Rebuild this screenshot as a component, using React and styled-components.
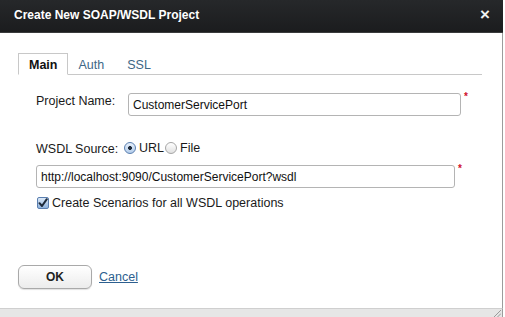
import styled, { createGlobalStyle } from "styled-components";

const GlobalStyle = createGlobalStyle`
  html, body {
    margin: 0;
    padding: 0;
    background: #fff;
    overflow: hidden;
  }
  body {
    font-family: "Liberation Sans", Arial, sans-serif;
  }
`;

const App = () => {
  return (
    <>
      <GlobalStyle />
      <Dialog>
        <TitleBar>
          <Title>Create New SOAP/WSDL Project</Title>
          <Close>×</Close>
        </TitleBar>
        <Body>
          <Tabs>
            <Tab active>Main</Tab>
            <Tab>Auth</Tab>
            <Tab>SSL</Tab>
          </Tabs>
          <Form>
            <Row>
              <Label>Project Name:</Label>
              <Field width={333}>
                <Input defaultValue="CustomerServicePort" />
                <Required>*</Required>
              </Field>
            </Row>
            <SourceRow>
              <Label>WSDL Source:</Label>
              <Radio checked />
              <RadioLabel>URL</RadioLabel>
              <Radio />
              <RadioLabel>File</RadioLabel>
            </SourceRow>
            <Field width={419}>
              <Input defaultValue="http://localhost:9090/CustomerServicePort?wsdl" />
              <Required>*</Required>
            </Field>
            <CheckRow>
              <Check>
                <svg width="10" height="10" viewBox="0 0 10 10">
                  <path d="M1.5 5.2 L4 8 L8.8 1.2" fill="none" stroke="#1d2a3a" strokeWidth="2" strokeLinecap="round" strokeLinejoin="round" />
                </svg>
              </Check>
              <span>Create Scenarios for all WSDL operations</span>
            </CheckRow>
          </Form>
          <Actions>
            <OkButton>OK</OkButton>
            <CancelLink href="#">Cancel</CancelLink>
          </Actions>
        </Body>
        <Footer>
          <Grip>
            <svg width="8" height="8" viewBox="0 0 8 8">
              <path d="M1 8 L8 1 M4.5 8 L8 4.5" stroke="#9a9a9a" strokeWidth="1" />
            </svg>
          </Grip>
        </Footer>
      </Dialog>
    </>
  );
};

const Dialog = styled.div`
  width: 503px;
  height: 317px;
  display: flex;
  flex-direction: column;
  background: #fff;
`;

const TitleBar = styled.div`
  height: 33px;
  flex: none;
  display: flex;
  align-items: center;
  justify-content: space-between;
  padding: 0 13px 0 14px;
  box-sizing: border-box;
  background: linear-gradient(#26282a, #1b1c1e);
  border-bottom: 1px solid #3a3b3c;
`;

const Title = styled.div`
  color: #fff;
  font-size: 12px;
  font-weight: 700;
  margin-top: -2px;
`;

const Close = styled.div`
  color: #f2f2f2;
  font-size: 17px;
  font-weight: 700;
  line-height: 1;
  margin-top: -3px;
`;

const Body = styled.div`
  flex: 1;
  display: flex;
  flex-direction: column;
  border-right: 1px solid #9c9c9c;
  padding: 20px 0 0 18px;
`;

const Tabs = styled.div`
  display: flex;
  align-items: flex-end;
  width: 464px;
  height: 21px;
  border-bottom: 1px solid #c8c8c8;
`;

const Tab = styled.div`
  height: 21px;
  box-sizing: border-box;
  display: flex;
  align-items: center;
  font-size: 12.5px;
  margin-bottom: -1px;
  ${(p) =>
    p.active
      ? `
    padding: 2px 10px 0 10px;
    color: #111;
    font-weight: 700;
    background: #fff;
    border: 1px solid #c8c8c8;
    border-bottom-color: #fff;
    height: 22px;
  `
      : `
    padding: 0 0 0 10px;
    color: #3d6786;
    &:nth-child(3) { padding-left: 23px; }
  `}
`;

const Form = styled.div`
  display: flex;
  flex-direction: column;
  padding: 18px 0 0 18px;
  font-size: 12.5px;
  color: #1a1a1a;
`;

const Row = styled.div`
  display: flex;
  align-items: flex-start;
`;

const Label = styled.span`
  width: 92px;
  flex: none;
  margin-top: 1px;
`;

const Field = styled.div`
  display: flex;
  align-items: flex-start;
  width: ${(p) => p.width}px;
  position: relative;
`;

const Input = styled.input`
  width: 100%;
  height: 23px;
  box-sizing: border-box;
  border: 1px solid #b4b4b4;
  border-radius: 3px;
  padding: 0 4px;
  font-family: "Liberation Sans", Arial, sans-serif;
  font-size: 12px;
  color: #111;
  outline: none;
`;

const Required = styled.span`
  position: absolute;
  right: -7px;
  top: -2px;
  color: #d0102a;
  font-size: 10px;
  font-weight: 700;
`;

const SourceRow = styled.div`
  display: flex;
  align-items: center;
  margin: 24px 0 9px;
  height: 16px;
`;

const Radio = styled.span`
  width: 12px;
  height: 12px;
  border-radius: 50%;
  box-sizing: border-box;
  flex: none;
  border: 1px solid ${(p) => (p.checked ? "#5a7fb0" : "#a6a6a6")};
  background: ${(p) =>
    p.checked
      ? "radial-gradient(circle, #1e2a3a 0 1.8px, transparent 2.2px), linear-gradient(#e7f0fb, #b4cdea)"
      : "linear-gradient(#ffffff, #e0e0e0)"};
  margin-left: ${(p) => (p.checked ? "-4px" : "0")};
`;

const RadioLabel = styled.span`
  margin: 0 1px 0 3px;
`;

const CheckRow = styled.div`
  display: flex;
  align-items: center;
  margin-top: 8px;
  gap: 3px;
`;

const Check = styled.span`
  width: 12px;
  height: 12px;
  box-sizing: border-box;
  border: 1px solid #5a7fb0;
  border-radius: 2px;
  background: linear-gradient(#dce9f8, #8fb2dc);
  display: flex;
  align-items: center;
  justify-content: center;
  margin-left: 1px;
`;

const Actions = styled.div`
  display: flex;
  align-items: center;
  gap: 7px;
  margin-top: auto;
  margin-bottom: 19px;
`;

const OkButton = styled.button`
  width: 74px;
  height: 24px;
  border: 1px solid #a9a9a9;
  border-radius: 6px;
  background: linear-gradient(#ffffff, #ececec);
  box-shadow: 0 1px 1px rgba(0, 0, 0, 0.12);
  font-family: "Liberation Sans", Arial, sans-serif;
  font-size: 12px;
  font-weight: 700;
  color: #222;
`;

const CancelLink = styled.a`
  color: #2d5f8f;
  font-size: 12.5px;
  text-decoration: underline;
`;

const Footer = styled.div`
  height: 8px;
  flex: none;
  background: #e6e6e6;
  border-top: 1px solid #cfcfcf;
  border-right: 1px solid #9c9c9c;
  display: flex;
  justify-content: flex-end;
  align-items: flex-end;
`;

const Grip = styled.div`
  display: flex;
  margin: 0 1px 0 0;
`;

export default App;
